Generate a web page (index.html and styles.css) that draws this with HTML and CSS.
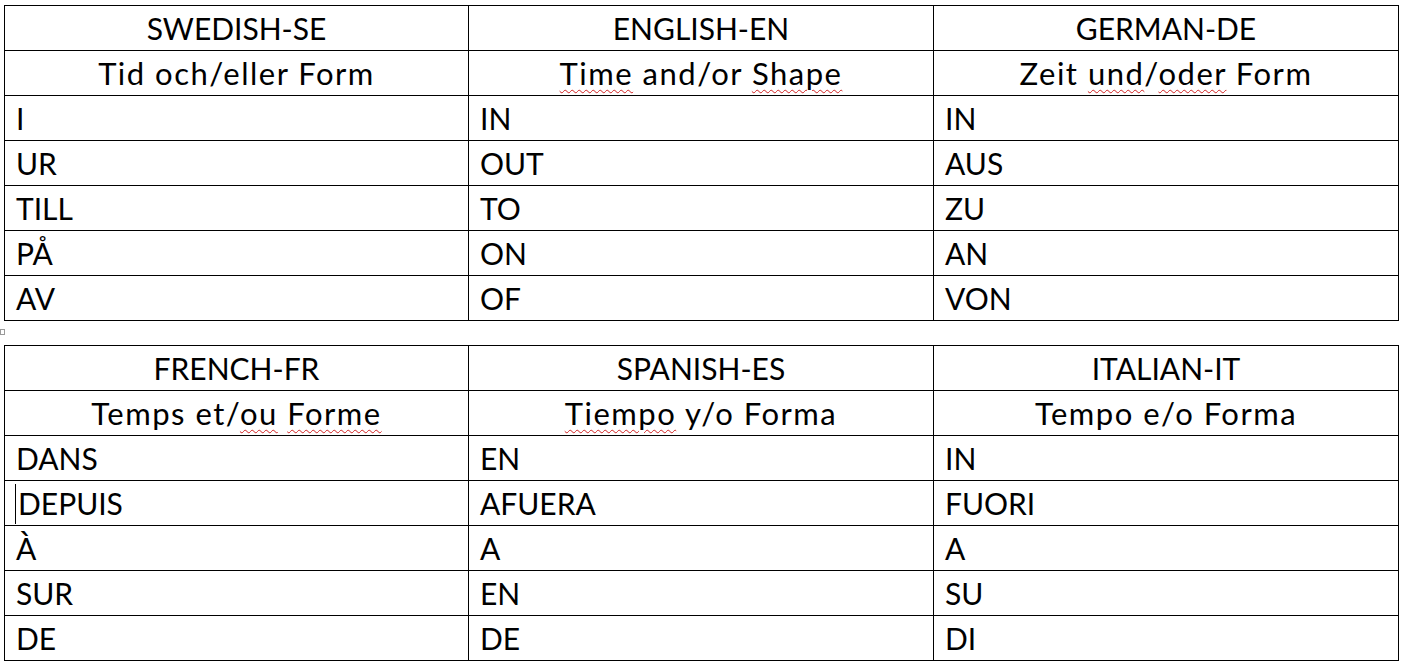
FILE: index.html
```html
<!DOCTYPE html>
<html>
<head>
<meta charset="utf-8">
<link rel="stylesheet" href="styles.css">
</head>
<body>
<div class="page">
<table class="grid">
<colgroup><col class="c1"><col class="c2"><col class="c3"></colgroup>
<tr class="head"><td>SWEDISH-SE</td><td>ENGLISH-EN</td><td>GERMAN-DE</td></tr>
<tr class="head sub"><td>Tid och/eller Form</td><td><span class="sq">Time</span> and/or <span class="sq">Shape</span></td><td>Zeit <span class="sq">und</span>/<span class="sq">oder</span> Form</td></tr>
<tr><td>I</td><td>IN</td><td>IN</td></tr>
<tr><td>UR</td><td>OUT</td><td>AUS</td></tr>
<tr><td>TILL</td><td>TO</td><td>ZU</td></tr>
<tr><td>PÅ</td><td>ON</td><td>AN</td></tr>
<tr><td>AV</td><td>OF</td><td>VON</td></tr>
</table>
<div class="spacer"><span class="anchor"></span></div>
<table class="grid">
<colgroup><col class="c1"><col class="c2"><col class="c3"></colgroup>
<tr class="head"><td>FRENCH-FR</td><td>SPANISH-ES</td><td>ITALIAN-IT</td></tr>
<tr class="head sub"><td>Temps et/<span class="sq">ou</span> <span class="sq">Forme</span></td><td><span class="sq">Tiempo</span> y/o Forma</td><td>Tempo e/o Forma</td></tr>
<tr><td>DANS</td><td>EN</td><td>IN</td></tr>
<tr><td class="cur"><span class="caret"></span>DEPUIS</td><td>AFUERA</td><td>FUORI</td></tr>
<tr><td>À</td><td>A</td><td>A</td></tr>
<tr><td>SUR</td><td>EN</td><td>SU</td></tr>
<tr><td>DE</td><td>DE</td><td>DI</td></tr>
</table>
</div>
</body>
</html>
```
FILE: styles.css
```css
html, body {
  margin: 0;
  padding: 0;
  background: #ffffff;
}
.page {
  padding: 5px 0 0 4px;
  font-family: Lato, "Liberation Sans", sans-serif;
  color: #000;
}
.grid {
  border-collapse: collapse;
  width: 1395px;
  table-layout: fixed;
}
.c1 { width: 464px; }
.c2 { width: 465px; }
.c3 { width: 465px; }
.grid td {
  border: 1px solid #000;
  height: 44px;
  padding: 0 11px;
  font-size: 30px;
  line-height: 44px;
  vertical-align: middle;
  white-space: nowrap;
  overflow: hidden;
}
.grid .head td {
  text-align: center;
}
.grid .sub td {
  font-size: 31px;
  letter-spacing: 1.5px;
}
.sq {
  text-decoration: underline wavy #d02020;
  text-decoration-thickness: 1px;
  text-underline-offset: 4px;
}
.spacer {
  height: 24px;
  position: relative;
}
.anchor {
  position: absolute;
  left: -4px;
  top: 8px;
  width: 5px;
  height: 6px;
  border: 1px solid #9a9a9a;
  box-sizing: border-box;
}
.grid td.cur {
  position: relative;
  padding-left: 13px;
}
.caret {
  position: absolute;
  left: 10px;
  top: 3px;
  width: 1px;
  height: 40px;
  background: #000;
}
```
